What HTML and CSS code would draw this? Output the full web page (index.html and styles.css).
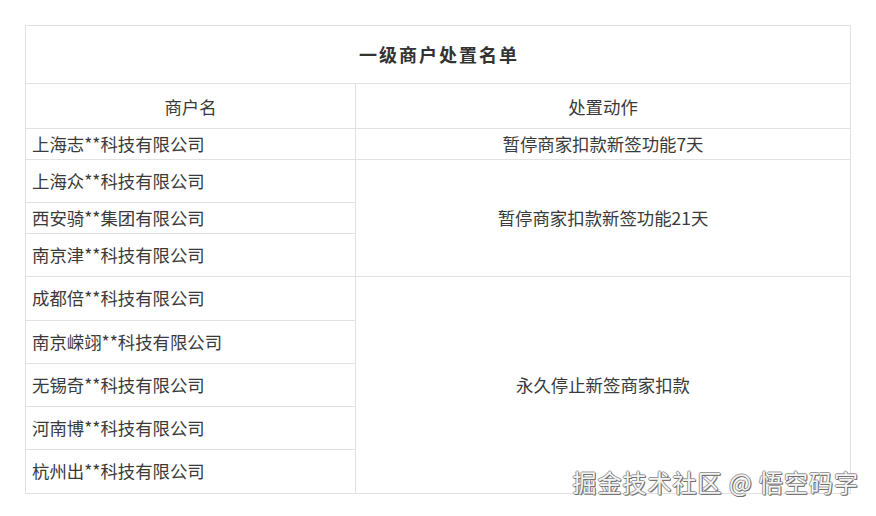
FILE: index.html
```html
<!DOCTYPE html>
<html lang="zh-CN">
<head>
<meta charset="utf-8">
<title>一级商户处置名单</title>
<link rel="stylesheet" href="styles.css">
</head>
<body>
<div class="page">
  <div class="sheet">
    <div class="cell title">一级商户处置名单</div>
    <div class="cell head">商户名</div>
    <div class="cell head">处置动作</div>

    <div class="cell name r1">上海志**科技有限公司</div>
    <div class="cell act r1">暂停商家扣款新签功能7天</div>

    <div class="cell name r2">上海众**科技有限公司</div>
    <div class="cell act r2to4">暂停商家扣款新签功能21天</div>
    <div class="cell name r3">西安骑**集团有限公司</div>
    <div class="cell name r4">南京津**科技有限公司</div>

    <div class="cell name r5">成都倍**科技有限公司</div>
    <div class="cell act r5to9">永久停止新签商家扣款</div>
    <div class="cell name r6">南京嵘翊**科技有限公司</div>
    <div class="cell name r7">无锡奇**科技有限公司</div>
    <div class="cell name r8">河南博**科技有限公司</div>
    <div class="cell name r9">杭州出**科技有限公司</div>
  </div>
  <div class="watermark">掘金技术社区 @ 悟空码字</div>
</div>
</body>
</html>
```
FILE: styles.css
```css
* { box-sizing: border-box; }
html, body { margin: 0; padding: 0; background: #fff; }
body {
  font-family: "Noto Sans CJK SC", "Noto Sans", sans-serif;
  color: #3a3a3a;
  font-size: 17.4px;
}
.page {
  position: relative;
  width: 876px;
  height: 516px;
  padding: 25px 0 0 25px;
  overflow: hidden;
}
.sheet {
  display: grid;
  width: 826px;
  grid-template-columns: 330px 495px;
  grid-template-rows: 58px 45px 31px 43px 31px 43px 44px 43px 43px 43px 44px;
  border-top: 1px solid #e2e2e2;
  border-left: 1px solid #e2e2e2;
}
.cell {
  display: flex;
  align-items: center;
  border-right: 1px solid #e2e2e2;
  border-bottom: 1px solid #e2e2e2;
  line-height: 1.2;
  white-space: nowrap;
}
.title {
  grid-column: 1 / 3;
  justify-content: center;
  font-size: 18px;
  font-weight: bold;
  letter-spacing: 2px;
  color: #333;
  padding-left: 2px;
}
.head { justify-content: center; padding-top: 2px; }
.name { padding: 0 6px; grid-column: 1; }
.act { justify-content: center; grid-column: 2; }
.r1 { grid-row: 3; }
.r2 { grid-row: 4; }
.r3 { grid-row: 5; }
.r4 { grid-row: 6; }
.r5 { grid-row: 7; }
.r6 { grid-row: 8; }
.r7 { grid-row: 9; }
.r8 { grid-row: 10; }
.r9 { grid-row: 11; }
.r2to4 { grid-row: 4 / 7; }
.r5to9 { grid-row: 7 / 12; }
.watermark {
  position: absolute;
  right: 17px;
  top: 468px;
  font-size: 24px;
  letter-spacing: 1px;
  line-height: 1.2;
  color: #f4f4f4;
  white-space: nowrap;
  text-shadow: 1px 1px 0 #6f6f6f, -1px 0 0 #9a9a9a, 0 -1px 0 #9a9a9a, 1px 0 0 #8a8a8a, 0 1px 0 #8a8a8a;
}
```
